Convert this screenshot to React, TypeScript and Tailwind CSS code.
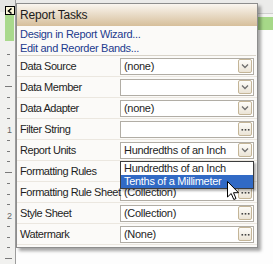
import React from "react";

const FONT = { fontFamily: '"Liberation Sans", Arial, sans-serif' };

function Ruler() {
  const ticks: React.ReactNode[] = [];
  const unit = 86;
  const origin = 43;
  for (let i = 0; i < 28; i++) {
    const y = Math.round(origin + (i * unit) / 8);
    if (y < 44 || y > 262) continue;
    const mod = i % 8;
    if (mod === 0) continue;
    const long = mod === 4;
    ticks.push(
      <line key={i} x1={long ? 5 : 7} x2={long ? 12 : 10} y1={y + 0.5} y2={y + 0.5} stroke="#7a7a7a" strokeWidth={1} />
    );
  }
  return (
    <div className="relative w-[16px] h-[264px] shrink-0 bg-[#f1f1ef] border-r border-[#9c9c9c]">
      <svg width="15" height="264" className="absolute left-0 top-0">
        <rect x="0" y="0" width="15" height="12" fill="#e6e6e4" />
        <rect x="5" y="13" width="9" height="28" fill="#a9d98c" />
        {ticks}
        <text x="7" y="133" fontSize="9" fill="#666" fontFamily="Liberation Sans, Arial, sans-serif">1</text>
        <text x="7" y="219" fontSize="9" fill="#666" fontFamily="Liberation Sans, Arial, sans-serif">2</text>
      </svg>
    </div>
  );
}

function DropBtn() {
  return (
    <div className="w-[14px] h-[14px] mr-[1px] shrink-0 rounded-[2px] border border-[#c4b597] bg-gradient-to-b from-[#fdfcf9] to-[#ebe4d6] flex items-center justify-center">
      <svg width="8" height="6" viewBox="0 0 8 6">
        <path d="M1 1.5 L4 4.5 L7 1.5" fill="none" stroke="#6f6f6f" strokeWidth="1.3" />
      </svg>
    </div>
  );
}

function DotsBtn() {
  return (
    <div className="w-[14px] h-[14px] mr-[1px] shrink-0 rounded-[2px] border border-[#c4b597] bg-gradient-to-b from-[#fdfcf9] to-[#ebe4d6] flex items-center justify-center">
      <svg width="9" height="3" viewBox="0 0 9 3">
        <rect x="0.5" y="1" width="1.6" height="1.6" fill="#444" />
        <rect x="3.7" y="1" width="1.6" height="1.6" fill="#444" />
        <rect x="6.9" y="1" width="1.6" height="1.6" fill="#444" />
      </svg>
    </div>
  );
}

type Row = { label: string; value: string; btn: "drop" | "dots" };

const rows: Row[] = [
  { label: "Data Source", value: "(none)", btn: "drop" },
  { label: "Data Member", value: "", btn: "drop" },
  { label: "Data Adapter", value: "(none)", btn: "drop" },
  { label: "Filter String", value: "", btn: "dots" },
  { label: "Report Units", value: "Hundredths of an Inch", btn: "drop" },
  { label: "Formatting Rules", value: "", btn: "dots" },
  { label: "Formatting Rule Sheet", value: "(Collection)", btn: "dots" },
  { label: "Style Sheet", value: "(Collection)", btn: "dots" },
  { label: "Watermark", value: "(None)", btn: "dots" },
];

function Popup() {
  return (
    <div className="absolute left-[16px] top-[3px] w-[242px] border border-[#8d8d8d] bg-[#fbfaf8] shadow-[3px_3px_3px_rgba(0,0,0,0.35)]">
      <div className="h-[22px] bg-gradient-to-b from-[#faf6f0] to-[#d6bf9b] flex items-center pl-[3px] text-[12px] tracking-[-0.2px] text-[#1b1b1b]">
        Report Tasks
      </div>
      <div className="pt-[1px] pl-[3px] text-[11px] tracking-[-0.3px] text-[#1d3b8e]">
        <div className="h-[14px] leading-[14px]">Design in Report Wizard...</div>
        <div className="h-[14px] leading-[14px]">Edit and Reorder Bands...</div>
      </div>
      <div className="mx-[1px] h-[1px] bg-[#d8d3c9]" />
      <div className="flex flex-col pb-[2px]">
        {rows.map((r) => (
          <div key={r.label} className="h-[21px] flex items-center border-b border-[#ebe7e0] text-[11px] text-[#1e1e1e]">
            <div className="relative z-10 w-[103px] pl-[3px] whitespace-nowrap overflow-visible tracking-[-0.45px]">{r.label}</div>
            <div className="ml-auto mr-[3px] w-[134px] h-[17px] border border-[#b1ada5] bg-white flex items-center tracking-[-0.3px]">
              <div className="flex-1 pl-[3px] whitespace-nowrap overflow-hidden">{r.value}</div>
              {r.btn === "drop" ? <DropBtn /> : <DotsBtn />}
            </div>
          </div>
        ))}
      </div>
      <div className="absolute z-20 left-[103px] top-[157px] w-[134px] border border-[#3d3d3d] bg-white text-[11px] tracking-[-0.3px] shadow-[2px_2px_2px_rgba(0,0,0,0.3)]">
        <div className="h-[13px] leading-[13px] pl-[3px] text-[#1e1e1e]">Hundredths of an Inch</div>
        <div className="h-[13px] leading-[13px] pl-[3px] bg-[#316ac5] text-white">Tenths of a Millimeter</div>
      </div>
    </div>
  );
}

export default function App() {
  return (
    <div className="relative w-[273px] h-[264px] overflow-hidden bg-white flex" style={FONT}>
      <Ruler />
      <div className="flex-1 flex flex-col">
        <div className="h-[14px] bg-[#ebebea] border-b border-[#cfcfcf]" />
        <div className="h-[3px] bg-[#f4f4f2]" />
        <div className="h-[13px] bg-[#a6d888]" />
        <div className="flex-1 bg-[#fdfdfd]" />
      </div>
      <Popup />
      <div className="absolute left-[5px] top-[6px] w-[10px] h-[9px] border border-black bg-[#fbf6d8] flex items-center justify-center">
        <svg width="6" height="6" viewBox="0 0 6 6">
          <path d="M4.5 0.5 L1.5 3 L4.5 5.5" fill="none" stroke="#000" strokeWidth="1.5" />
        </svg>
      </div>
      <svg className="absolute z-30 left-[227px] top-[181px]" width="13" height="20" viewBox="0 0 13 20">
        <path d="M0.5 0.5 L0.5 16 L4.2 12.5 L6.8 18.5 L9 17.5 L6.5 11.7 L11.5 11.7 Z" fill="#fff" stroke="#000" strokeWidth="1" strokeLinejoin="round" />
      </svg>
    </div>
  );
}
